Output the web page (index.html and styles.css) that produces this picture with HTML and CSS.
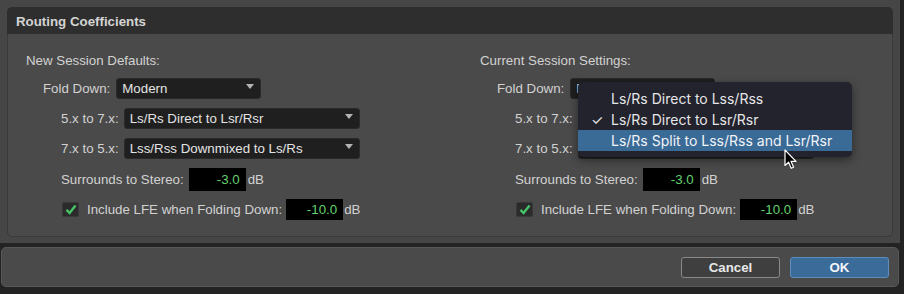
FILE: index.html
```html
<!DOCTYPE html>
<html lang="en">
<head>
  <meta charset="UTF-8" />
  <title>Routing Coefficients</title>
  <link rel="stylesheet" href="styles.css">
</head>
<body>

  <div class="dialog">
    <div class="main">
      <div class="group">
        <div class="group-head">Routing Coefficients</div>
        <div class="group-body">

          <div class="col">
            <div class="col-title">New Session Defaults:</div>
            <div class="row row-fold">
              <span class="lbl">Fold Down:</span>
              <div class="select select-fold">Modern</div>
            </div>
            <div class="row row-sub">
              <span class="lbl">5.x to 7.x:</span>
              <div class="select select-wide">Ls/Rs Direct to Lsr/Rsr</div>
            </div>
            <div class="row row-sub">
              <span class="lbl">7.x to 5.x:</span>
              <div class="select select-wide">Lss/Rss Downmixed to Ls/Rs</div>
            </div>
            <div class="row row-sub row-tall">
              <span class="lbl">Surrounds to Stereo:</span>
              <div class="num num-tall">-3.0</div>
              <span class="unit">dB</span>
            </div>
            <div class="row row-sub row-lfe">
              <span class="check"><svg width="12" height="11" viewBox="0 0 12 11"><path d="M1.5 5.8 L4.6 9 L10.5 1.5" fill="none" stroke="#45c468" stroke-width="2.4"/></svg></span>
              <span class="lbl lbl-lfe">Include LFE when Folding Down:</span>
              <div class="num">-10.0</div>
              <span class="unit">dB</span>
            </div>
          </div>

          <div class="col">
            <div class="col-title">Current Session Settings:</div>
            <div class="row row-fold">
              <span class="lbl">Fold Down:</span>
              <div class="select select-fold">Modern</div>
            </div>
            <!-- values of these two are hidden under the open menu -->
            <div class="row row-sub">
              <span class="lbl">5.x to 7.x:</span>
              <div class="select select-wide"></div>
            </div>
            <div class="row row-sub">
              <span class="lbl">7.x to 5.x:</span>
              <div class="select select-wide"></div>
            </div>
            <div class="row row-sub row-tall">
              <span class="lbl">Surrounds to Stereo:</span>
              <div class="num num-tall">-3.0</div>
              <span class="unit">dB</span>
            </div>
            <div class="row row-sub row-lfe">
              <span class="check"><svg width="12" height="11" viewBox="0 0 12 11"><path d="M1.5 5.8 L4.6 9 L10.5 1.5" fill="none" stroke="#45c468" stroke-width="2.4"/></svg></span>
              <span class="lbl lbl-lfe">Include LFE when Folding Down:</span>
              <div class="num">-10.0</div>
              <span class="unit">dB</span>
            </div>
          </div>

        </div>

        <!-- open popup of the current session 5.x to 7.x menu -->
        <ul class="menu">
          <li class="menu-item">Ls/Rs Direct to Lss/Rss</li>
          <li class="menu-item checked">Ls/Rs Direct to Lsr/Rsr</li>
          <li class="menu-item active">Ls/Rs Split to Lss/Rss and Lsr/Rsr</li>
        </ul>

        <svg class="cursor" width="14" height="21" viewBox="0 0 14 21">
          <path d="M1 1 L1 16.5 L4.6 13.2 L7.2 19.3 L9.6 18.3 L7.1 12.4 L12 12.4 Z" fill="#000" stroke="#fff" stroke-width="1.2" stroke-linejoin="round"/>
        </svg>
      </div>
    </div>

    <div class="footer">
      <button class="btn btn-cancel">Cancel</button>
      <button class="btn btn-ok">OK</button>
    </div>
  </div>

</body>
</html>
```

FILE: styles.css
```css
* { box-sizing: border-box; margin: 0; padding: 0; }

body {
  width: 904px;
  height: 294px;
  overflow: hidden;
  background: #232323;
  font-family: 'Liberation Sans', Arial, sans-serif;
  font-size: 13.3px;
  color: #d2d2d2;
}

.dialog {
  width: 900px;
}

.main {
  height: 243px;
  background: #464646;
  padding: 7px 7px 6px 7px;
}

.group {
  position: relative;
  height: 230px;
}

.group-head {
  height: 27px;
  line-height: 29px;
  padding-left: 9px;
  background: #2e2e2e;
  border-radius: 5px 5px 0 0;
  font-weight: bold;
  color: #d4d4d4;
}

.group-body {
  height: 203px;
  background: #4a4a4a;
  border: 1px solid #3a3a3a;
  border-top: none;
  border-radius: 0 0 5px 5px;
  padding-left: 18px;
  display: grid;
  grid-template-columns: 454px 1fr;
}

.col {
  display: flex;
  flex-direction: column;
  gap: 9px;
  padding-top: 18px;
}

.col-title {
  height: 16px;
  line-height: 17px;
  margin-bottom: 1px;
}

.row {
  display: flex;
  align-items: center;
  gap: 5px;
  height: 21px;
}

.row-fold { padding-left: 17px; gap: 6px; }
.row-sub { padding-left: 35px; }
.row-tall { height: 23px; }
.row-lfe { margin-top: -1px; padding-left: 36px; gap: 4px; }

.lbl { white-space: nowrap; }
.lbl-lfe { margin-left: 4px; }

.select {
  position: relative;
  height: 21px;
  line-height: 20px;
  padding-left: 5px;
  background: #1f1f1f;
  border: 1px solid #2a2a2a;
  border-radius: 3px;
  color: #e4e4e4;
  white-space: nowrap;
}

.select::after {
  content: '';
  position: absolute;
  right: 6px;
  top: 5px;
  border-left: 4px solid transparent;
  border-right: 4px solid transparent;
  border-top: 5px solid #b4b4b4;
}

.select-fold { width: 145px; }
.select-wide { width: 236px; }

.num {
  width: 57px;
  height: 21px;
  line-height: 21px;
  background: #000;
  color: #62d26e;
  text-align: right;
  padding-right: 6px;
}

.num-tall { height: 23px; line-height: 23px; }

.unit { margin-left: -3px; }

.check {
  width: 17px;
  height: 15px;
  background: #2b2b2b;
  border: 1px solid #383838;
  border-radius: 2px;
  display: flex;
  align-items: center;
  justify-content: center;
}

.menu {
  position: absolute;
  left: 571px;
  top: 75px;
  width: 274px;
  padding: 6px 0;
  list-style: none;
  background: #22232c;
  border-radius: 5px;
  box-shadow: 0 3px 10px rgba(0,0,0,0.45);
  font-family: Inter, 'Liberation Sans', sans-serif;
  font-size: 14px;
  color: #e6e6e8;
}

.menu-item {
  position: relative;
  height: 21px;
  line-height: 21px;
  padding-left: 33px;
  white-space: nowrap;
}

.menu-item.checked::before {
  content: '\2713';
  position: absolute;
  left: 13px;
}

.menu-item.active {
  background: #3a6a96;
  color: #f2f4f8;
}

.cursor {
  position: absolute;
  left: 777px;
  top: 142px;
}

.footer {
  height: 40px;
  margin: 4px 1px 0 1px;
  background: #4a4a4a;
  border: 1px solid #585858;
  border-radius: 5px;
  display: flex;
  justify-content: flex-end;
  align-items: flex-start;
  gap: 10px;
  padding: 9px 9px 0 0;
}

.btn {
  width: 99px;
  height: 21px;
  border-radius: 3px;
  font-family: 'Liberation Sans', Arial, sans-serif;
  font-size: 13.3px;
  font-weight: bold;
  color: #e8e8e8;
}

.btn-cancel {
  background: #3f3f3f;
  border: 1px solid #8a8a8a;
}

.btn-ok {
  background: #3a6b99;
  border: 1px solid #5b8dbd;
  color: #f4f6fa;
}
```
